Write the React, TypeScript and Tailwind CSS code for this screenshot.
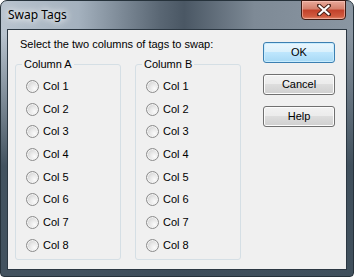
import React from 'react';

const cols = ['Col 1', 'Col 2', 'Col 3', 'Col 4', 'Col 5', 'Col 6', 'Col 7', 'Col 8'];

function Radio({ label }: { label: string }) {
  return (
    <label className="flex h-[22.7px] items-center gap-[4px]">
      <span className="h-[13px] w-[13px] rounded-full border border-[#8c8c8c] bg-[radial-gradient(circle_at_68%_68%,#fbfbfb_0%,#e6e6e6_45%,#c4c4c4_100%)] shadow-[inset_0_0_0_1px_#f4f4f4]" />
      <span>{label}</span>
    </label>
  );
}

function Group({ title }: { title: string }) {
  return (
    <fieldset className="h-[202px] w-[106px] rounded-[3px] border border-[#d5dfe5]">
      <legend className="ml-[6px] px-[2px] leading-[13px]">{title}</legend>
      <div className="pl-[10px] pt-[4px]">
        {cols.map((c) => (
          <Radio key={c} label={c} />
        ))}
      </div>
    </fieldset>
  );
}

function Button({ children, primary }: { children: React.ReactNode; primary?: boolean }) {
  return (
    <button
      className={
        primary
          ? 'h-[21px] w-[72px] rounded-[3px] border border-[#3c7fb1] bg-[linear-gradient(to_bottom,#eaf6fd_0%,#d9f0fc_50%,#bee6fd_50%,#a7d9f5_100%)] shadow-[inset_0_0_0_1px_#c8ecfe]'
          : 'h-[21px] w-[72px] rounded-[3px] border border-[#707070] bg-[linear-gradient(to_bottom,#f2f2f2_0%,#ebebeb_50%,#dddddd_50%,#cfcfcf_100%)] shadow-[inset_0_0_0_1px_#fcfcfc]'
      }
    >
      {children}
    </button>
  );
}

export default function App() {
  return (
    <div className="flex h-[277px] w-[354px] flex-col rounded-t-[7px] rounded-b-[4px] border border-[#26323b] bg-[linear-gradient(to_bottom,rgba(60,76,89,0)_0%,rgba(60,76,89,0)_12%,rgba(60,76,89,0.95)_60%),linear-gradient(to_right,#b9c4cf_0%,#a4b1be_22%,#5a6774_45%,#4a5764_52%,#7e8a96_72%,#8a96a2_100%)]">
      <div className="flex h-[28px] shrink-0 items-start justify-between pl-[7px] pr-[7px]">
        <span className="mt-[5px] text-[12px] text-black [font-family:'Noto_Sans',sans-serif] [text-shadow:0_0_6px_#ffffff,0_0_10px_#ffffff]">
          Swap Tags
        </span>
        <div className="-mt-px flex h-[20px] w-[45px] items-center justify-center rounded-b-[4px] border border-[#3e1a12] bg-[linear-gradient(to_bottom,#e9a99a_0%,#d47f6b_45%,#c2412a_50%,#d05a3f_85%,#e08a6e_100%)] shadow-[inset_0_0_0_1px_rgba(255,210,200,0.5)]">
          <svg width="14" height="12" viewBox="0 0 14 12">
            <path d="M2 1.5 L12 10.5 M12 1.5 L2 10.5" stroke="#4a2218" strokeWidth="4" strokeLinecap="square" />
            <path d="M2.5 2 L11.5 10 M11.5 2 L2.5 10" stroke="#ffffff" strokeWidth="2.2" strokeLinecap="square" />
          </svg>
        </div>
      </div>
      <div className="mx-[6px] flex h-[241px] shrink-0 border border-[#2b3742] bg-[#f0f0f0] text-[11px] leading-[13px] text-black [font-family:'Liberation_Sans',Arial,sans-serif]">
        <div className="flex flex-col">
          <div className="ml-[12px] mt-[8px]">Select the two columns of tags to swap:</div>
          <div className="ml-[7px] mt-[7px] flex gap-[14px]">
            <Group title="Column A" />
            <Group title="Column B" />
          </div>
        </div>
        <div className="ml-auto mr-[11px] mt-[12px] flex flex-col gap-[11px]">
          <Button primary>OK</Button>
          <Button>Cancel</Button>
          <Button>Help</Button>
        </div>
      </div>
    </div>
  );
}
